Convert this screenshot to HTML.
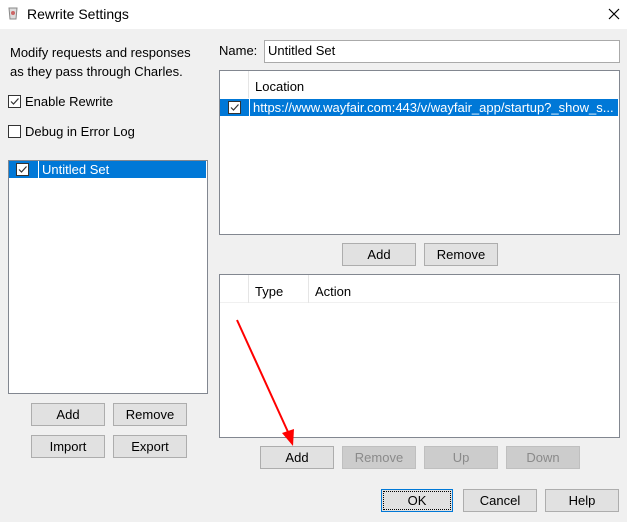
<!DOCTYPE html>
<html><head><style>
body{margin:0;width:627px;height:522px;background:#f0f0f0;font-family:"Liberation Sans",sans-serif;font-size:13px;color:#000;position:relative;overflow:hidden}
.a{position:absolute}
.tb{left:0;top:0;width:627px;height:29px;background:#fff}
.btn{position:absolute;height:21px;border:1px solid #adadad;background:#e1e1e1;text-align:center;line-height:21px;box-sizing:content-box}
.dis{background:#cccccc;border-color:#bfbfbf;color:#8a8a8a}
.box{position:absolute;background:#fff;border:1px solid #828790}
.cb{position:absolute;width:11px;height:11px;border:1px solid #333;background:#fff}
.sel{position:absolute;background:#0078d7;color:#fff;height:17px;line-height:17px}
</style></head><body>
<div class="a tb"></div>
<svg class="a" style="left:7px;top:6px" width="12" height="16"><path d="M2 2h8l-1 11H3z" fill="#ddd" stroke="#888"/><circle cx="6" cy="7" r="2" fill="#c66"/></svg>
<div class="a" style="left:27px;top:6px;font-size:14px">Rewrite Settings</div>
<svg class="a" style="left:608px;top:8px" width="12" height="12"><path d="M1 1L11 11M11 1L1 11" stroke="#000" stroke-width="1.2"/></svg>

<div class="a" style="left:10px;top:43px;line-height:19px">Modify requests and responses<br>as they pass through Charles.</div>
<div class="cb" style="left:8px;top:95px"><svg width="11" height="11" style="position:absolute;left:0;top:0"><path d="M2 5.5L4.5 8L9.5 2.5" stroke="#333" fill="none" stroke-width="1.2"/></svg></div>
<div class="a" style="left:25px;top:94px">Enable Rewrite</div>
<div class="cb" style="left:8px;top:125px"></div>
<div class="a" style="left:25px;top:124px">Debug in Error Log</div>

<div class="box" style="left:8px;top:160px;width:198px;height:232px"></div>
<div class="sel" style="left:9px;top:161px;width:197px"></div>
<div class="cb" style="left:16px;top:163px"><svg width="11" height="11" style="position:absolute"><path d="M2 5.5L4.5 8L9.5 2.5" stroke="#333" fill="none" stroke-width="1.2"/></svg></div>
<div class="a" style="left:38px;top:161px;width:1px;height:17px;background:#fff"></div>
<div class="a" style="left:42px;top:162px;color:#fff">Untitled Set</div>

<div class="btn" style="left:31px;top:403px;width:72px">Add</div>
<div class="btn" style="left:113px;top:403px;width:72px">Remove</div>
<div class="btn" style="left:31px;top:435px;width:72px">Import</div>
<div class="btn" style="left:113px;top:435px;width:72px">Export</div>

<div class="a" style="left:219px;top:43px">Name:</div>
<div class="box" style="left:264px;top:40px;width:354px;height:21px;border-color:#aaa"></div>
<div class="a" style="left:268px;top:43px">Untitled Set</div>

<div class="box" style="left:219px;top:70px;width:399px;height:163px"></div>
<div class="a" style="left:248px;top:71px;width:1px;height:27px;background:#e5e5e5"></div>
<div class="a" style="left:255px;top:79px">Location</div>
<div class="sel" style="left:220px;top:99px;width:398px"></div>
<div class="cb" style="left:228px;top:101px"><svg width="11" height="11" style="position:absolute"><path d="M2 5.5L4.5 8L9.5 2.5" stroke="#333" fill="none" stroke-width="1.2"/></svg></div>
<div class="a" style="left:249px;top:99px;width:1px;height:17px;background:#fff"></div>
<div class="a" style="left:253px;top:100px;color:#fff;white-space:nowrap">https://www.wayfair.com:443/v/wayfair_app/startup?_show_s...</div>

<div class="btn" style="left:342px;top:243px;width:72px">Add</div>
<div class="btn" style="left:424px;top:243px;width:72px">Remove</div>

<div class="box" style="left:219px;top:274px;width:399px;height:162px"></div>
<div class="a" style="left:220px;top:302px;width:398px;height:1px;background:#f0f0f0"></div>
<div class="a" style="left:248px;top:275px;width:1px;height:28px;background:#e5e5e5"></div>
<div class="a" style="left:308px;top:275px;width:1px;height:28px;background:#e5e5e5"></div>
<div class="a" style="left:255px;top:284px">Type</div>
<div class="a" style="left:315px;top:284px">Action</div>

<div class="btn" style="left:260px;top:446px;width:72px">Add</div>
<div class="btn dis" style="left:342px;top:446px;width:72px">Remove</div>
<div class="btn dis" style="left:424px;top:446px;width:72px">Up</div>
<div class="btn dis" style="left:506px;top:446px;width:72px">Down</div>

<div class="btn" style="left:381px;top:489px;width:70px;border:1px solid #0078d7;outline:1px dotted #000;outline-offset:-3px">OK</div>
<div class="btn" style="left:463px;top:489px;width:72px">Cancel</div>
<div class="btn" style="left:545px;top:489px;width:72px">Help</div>

<svg class="a" style="left:0;top:0" width="627" height="522"><path d="M237 320L288 432" stroke="#f00" stroke-width="2"/><path d="M282 433L293 446L294 429z" fill="#f00"/></svg>
</body></html>
